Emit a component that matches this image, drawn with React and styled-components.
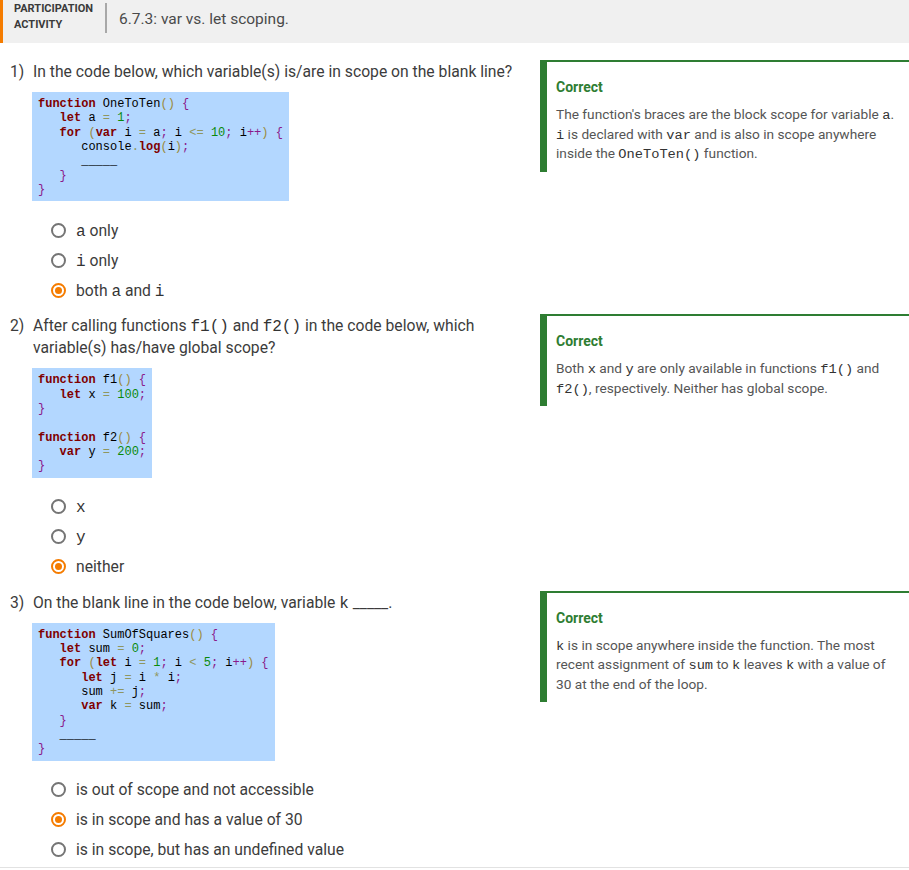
import React from "react";
import styled, { createGlobalStyle } from "styled-components";

const GlobalStyle = createGlobalStyle`
  body {
    margin: 0;
    background: #fff;
    font-family: Roboto, "Noto Sans", Arial, sans-serif;
    color: #333;
  }
`;

// built lazily so the styled components below are defined first
const getQuestions = () => [
  {
    num: "1)",
    text: (
      <>In the code below, which variable(s) is/are in scope on the blank line?</>
    ),
    code: [
      "function OneToTen() {",
      "   let a = 1;",
      "   for (var i = a; i <= 10; i++) {",
      "      console.log(i);",
      "      _____",
      "   }",
      "}",
    ],
    options: [
      { label: <><Mono>a</Mono> only</> },
      { label: <><Mono>i</Mono> only</> },
      { label: <>both <Mono>a</Mono> and <Mono>i</Mono></>, checked: true },
    ],
    feedback: (
      <>
        The function's braces are the block scope for variable <FbMono>a</FbMono>.{" "}
        <FbMono>i</FbMono> is declared with <FbMono>var</FbMono> and is also in
        scope anywhere inside the <FbMono>OneToTen()</FbMono> function.
      </>
    ),
  },
  {
    num: "2)",
    text: (
      <>
        After calling functions <Mono>f1()</Mono> and <Mono>f2()</Mono> in the
        code below, which variable(s) has/have global scope?
      </>
    ),
    code: [
      "function f1() {",
      "   let x = 100;",
      "}",
      "",
      "function f2() {",
      "   var y = 200;",
      "}",
    ],
    options: [
      { label: <Mono>x</Mono> },
      { label: <Mono>y</Mono> },
      { label: <>neither</>, checked: true },
    ],
    feedback: (
      <>
        Both <FbMono>x</FbMono> and <FbMono>y</FbMono> are only available in
        functions <FbMono>f1()</FbMono> and <FbMono>f2()</FbMono>, respectively.
        Neither has global scope.
      </>
    ),
  },
  {
    num: "3)",
    text: (
      <>
        On the blank line in the code below, variable <Mono>k</Mono> _____.
      </>
    ),
    code: [
      "function SumOfSquares() {",
      "   let sum = 0;",
      "   for (let i = 1; i < 5; i++) {",
      "      let j = i * i;",
      "      sum += j;",
      "      var k = sum;",
      "   }",
      "   _____",
      "}",
    ],
    options: [
      { label: <>is out of scope and not accessible</> },
      { label: <>is in scope and has a value of 30</>, checked: true },
      { label: <>is in scope, but has an undefined value</> },
    ],
    feedback: (
      <>
        <FbMono>k</FbMono> is in scope anywhere inside the function. The most
        recent assignment of <FbMono>sum</FbMono> to <FbMono>k</FbMono> leaves{" "}
        <FbMono>k</FbMono> with a value of 30 at the end of the loop.
      </>
    ),
  },
];

const tokenRe =
  /(\s+)|\b(function|let|var|for|log)\b|(\d+)|(\+\+)|([{};])|([()])|(<=|\+=|[=<*.])|([A-Za-z_]\w*)/g;

function tokenize(line) {
  const out = [];
  let m;
  tokenRe.lastIndex = 0;
  while ((m = tokenRe.exec(line))) {
    let kind = "plain";
    if (m[2]) kind = "kw";
    else if (m[3]) kind = "num";
    else if (m[4] || m[5]) kind = "brace";
    else if (m[6]) kind = "paren";
    else if (m[7]) kind = "op";
    out.push({ kind, text: m[0] });
  }
  return out;
}

function CodeLine({ line }) {
  if (!line) return <Line>{" "}</Line>;
  return (
    <Line>
      {tokenize(line).map((t, i) => (
        <Tok key={i} $kind={t.kind}>
          {t.text}
        </Tok>
      ))}
    </Line>
  );
}

export default function App() {
  const questions = getQuestions();
  return (
    <>
      <GlobalStyle />
      <Activity>
        <Header>
          <Label>
            Participation
            <br />
            Activity
          </Label>
          <Divider />
          <Title>6.7.3: var vs. let scoping.</Title>
        </Header>
        <Content>
          {questions.map((q) => (
            <Row key={q.num}>
              <Left>
                <Question>
                  <Num>{q.num}</Num>
                  <QText>{q.text}</QText>
                </Question>
                <Indent>
                  <CodeBox>
                    {q.code.map((l, i) => (
                      <CodeLine key={i} line={l} />
                    ))}
                  </CodeBox>
                  <Options>
                    {q.options.map((o, i) => (
                      <Option key={i}>
                        <Radio $checked={!!o.checked} />
                        <span>{o.label}</span>
                      </Option>
                    ))}
                  </Options>
                </Indent>
              </Left>
              <Feedback>
                <FbTitle>Correct</FbTitle>
                <FbText>{q.feedback}</FbText>
              </Feedback>
            </Row>
          ))}
        </Content>
      </Activity>
    </>
  );
}

const Activity = styled.div`
  width: 909px;
  border-bottom: 1px solid #e2e2e2;
`;

const Header = styled.header`
  display: flex;
  align-items: flex-start;
  height: 43px;
  box-sizing: border-box;
  background: #f0f0f0;
  border-left: 3px solid #f57c00;
`;

const Label = styled.div`
  width: 91px;
  padding: 1px 0 0 11px;
  font-size: 11px;
  line-height: 15.5px;
  font-weight: 700;
  text-transform: uppercase;
  color: #3a3a3a;
`;

const Divider = styled.div`
  width: 2px;
  height: 30px;
  margin-top: 3px;
  background: #a8a8a8;
`;

const Title = styled.div`
  margin: 8px 0 0 12px;
  font-size: 15.5px;
  line-height: 22px;
  color: #4a4a4a;
`;

const Content = styled.main`
  padding: 17px 0 2px;
`;

const Row = styled.section`
  display: flex;
  align-items: flex-start;
  & + & {
    margin-top: 9px;
  }
`;

const Left = styled.div`
  width: 530px;
  flex-shrink: 0;
  box-sizing: border-box;
  padding-left: 10px;
`;

const Question = styled.div`
  display: flex;
  padding-top: 1px;
  font-size: 15.7px;
  line-height: 22px;
  color: #3c3c3c;
`;

const Num = styled.span`
  width: 23px;
  flex-shrink: 0;
`;

const QText = styled.div`
  flex: 1;
`;

const Mono = styled.code`
  font-family: "Liberation Mono", "DejaVu Sans Mono", monospace;
  font-size: 16px;
  line-height: 1;
  color: #333;
`;

const Indent = styled.div`
  padding-left: 22px;
`;

const CodeBox = styled.div`
  width: fit-content;
  margin-top: 9px;
  padding: 5px 6px 4px;
  background: #b3d7ff;
  font-family: "Liberation Mono", "DejaVu Sans Mono", monospace;
  font-size: 12px;
  line-height: 14.33px;
  white-space: pre;
  color: #000;
`;

const Line = styled.div`
  height: 14.33px;
`;

const tokColors = {
  kw: "#800000",
  num: "#0a8a0a",
  brace: "#8a1a8a",
  paren: "#9a8a3c",
  op: "#8f9660",
  plain: "#000",
};

const Tok = styled.span`
  color: ${(p) => tokColors[p.$kind]};
  font-weight: ${(p) => (p.$kind === "kw" ? 700 : 400)};
`;

const Options = styled.div`
  margin-top: 14px;
`;

const Option = styled.div`
  display: flex;
  align-items: center;
  gap: 10px;
  height: 30px;
  padding-left: 19px;
  font-size: 15.7px;
  color: #3c3c3c;
`;

const Radio = styled.span`
  display: grid;
  place-items: center;
  width: 15px;
  height: 15px;
  box-sizing: border-box;
  border-radius: 50%;
  border: 2px solid ${(p) => (p.$checked ? "#f57c00" : "#757575")};
  &::after {
    content: "";
    width: 7px;
    height: 7px;
    border-radius: 50%;
    background: ${(p) => (p.$checked ? "#f57c00" : "transparent")};
  }
`;

const Feedback = styled.aside`
  flex: 1;
  margin-left: 10px;
  padding: 15px 8px 8px 9px;
  border-top: 2px solid #2e7d32;
  border-left: 7px solid #2e7d32;
`;

const FbTitle = styled.div`
  font-size: 14px;
  line-height: 20px;
  font-weight: 700;
  color: #2e7d32;
`;

const FbText = styled.div`
  margin-top: 8px;
  font-size: 13.7px;
  line-height: 19.5px;
  color: #555;
`;

const FbMono = styled.code`
  font-family: "Liberation Mono", "DejaVu Sans Mono", monospace;
  font-size: 13.7px;
  line-height: 1;
  color: #333;
`;
